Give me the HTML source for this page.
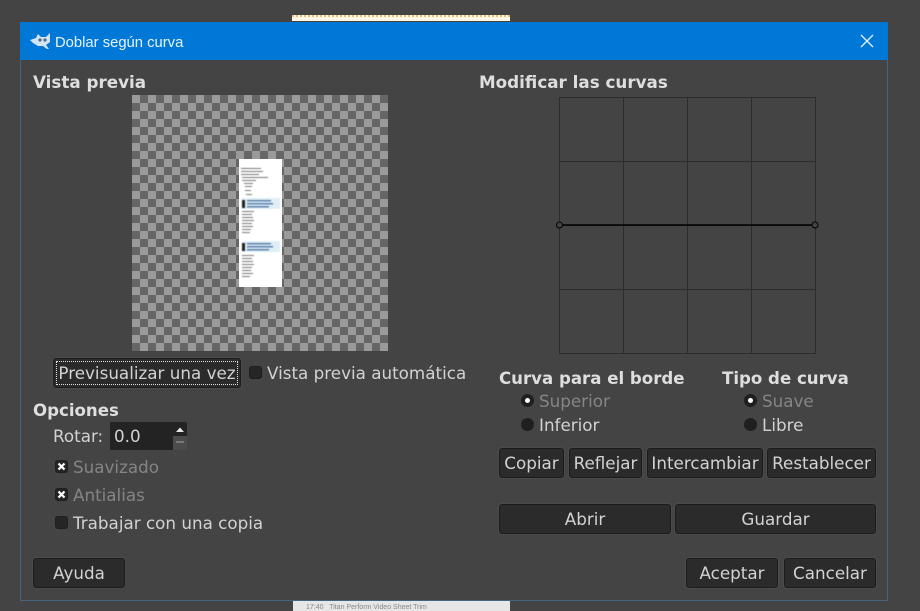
<!DOCTYPE html>
<html><head><meta charset="utf-8">
<style>
html,body{margin:0;padding:0;width:920px;height:611px;overflow:hidden;background:#444444;}
body{position:relative;font-family:"DejaVu Sans",sans-serif;font-size:16.75px;color:#d2d2d2;}
.a{position:absolute;white-space:nowrap;line-height:22px;}
.h{font-weight:bold;color:#dedede;font-size:16.6px;}
.d{color:#858585;}
.btn{position:absolute;box-sizing:border-box;background:#2b2b2b;border:1px solid #1c1c1c;border-radius:3px;box-shadow:0 0 0 1px #4b4b4b;text-align:center;color:#d2d2d2;height:30px;line-height:28px;padding-top:0;white-space:nowrap;}
.cb{position:absolute;width:13px;height:13px;background:#252525;border-radius:3px;box-sizing:border-box;border:1px solid #1e1e1e;}
.rd{position:absolute;width:13px;height:13px;background:#1f1f1f;border-radius:50%;}
.rd i{position:absolute;left:4px;top:4px;width:5px;height:5px;background:#fff;border-radius:50%;}
</style></head><body>
<div class="a" style="left:292px;top:15px;width:218px;height:8px;background:#fff8e8;border-top:2px dotted #e8c070;box-sizing:border-box;"></div>
<div class="a" style="left:293px;top:601px;width:217px;height:10px;background:#e6e6e6;"></div>
<div class="a" style="left:306px;top:604px;font:7px/7px 'Liberation Sans',sans-serif;color:#888;">17:40 &nbsp; Titan Perform Video Sheet Trim</div>
<div class="a" style="left:20px;top:22px;width:868px;height:579px;box-sizing:border-box;border:1px solid #46647e;background:#444444;box-shadow:0 -1px 0 #4a4038;"></div>
<div class="a" style="left:20px;top:22px;width:868px;height:38px;background:#0078d7;"></div>
<svg class="a" style="left:30px;top:32px;" width="21" height="18" viewBox="0 0 21 18"><path d="M0 8 L6 6 L8 2 L11 5 L16 5 L20 1 L20 10 L16 13 L19 17 L17 17 L13 14 L8 14 L3 11 Z" fill="#d4e4f2"/><circle cx="10" cy="8" r="1.6" fill="#4a6a8a"/><circle cx="15" cy="8" r="1.6" fill="#4a6a8a"/></svg>
<div class="a" style="left:55px;top:33px;font:14.8px/20px 'Liberation Sans',sans-serif;color:#e8f4ff;">Doblar según curva</div>
<svg class="a" style="left:860px;top:34px;" width="14" height="14" viewBox="0 0 14 14"><path d="M1 1 L13 13 M13 1 L1 13" stroke="#e6f2ff" stroke-width="1.3" fill="none"/></svg>

<div class="a h" style="left:33px;top:71px;font-size:16.75px;">Vista previa</div>
<div class="a h" style="left:479px;top:71px;font-size:16.75px;">Modificar las curvas</div>

<!-- preview -->
<div class="a" style="left:132px;top:95px;width:256px;height:256px;background-color:#9a9a9a;background-image:linear-gradient(45deg,#666 25%,transparent 25%,transparent 75%,#666 75%),linear-gradient(45deg,#666 25%,transparent 25%,transparent 75%,#666 75%);background-size:16px 16px;background-position:0 0,8px 8px;"></div>
<div class="a" style="left:239px;top:159px;width:43px;height:128px;background:#fff;"></div>
<svg class="a" style="left:239px;top:159px;filter:blur(0.4px);" width="43" height="128" viewBox="0 0 43 128">
<g fill="#777"><rect x="2" y="9" width="20" height="1"/><rect x="2" y="12" width="22" height="1"/><rect x="2" y="15" width="18" height="1"/><rect x="3" y="18" width="26" height="1"/><rect x="3" y="21" width="14" height="1"/><rect x="5" y="24" width="9" height="1"/><rect x="6" y="27" width="7" height="1"/><rect x="6" y="31" width="6" height="1"/><rect x="7" y="35" width="6" height="1"/>
<rect x="3" y="52" width="12" height="1"/><rect x="3" y="55" width="10" height="1"/><rect x="3" y="58" width="11" height="1"/><rect x="3" y="61" width="12" height="1"/><rect x="3" y="64" width="10" height="1"/><rect x="3" y="67" width="11" height="1"/><rect x="3" y="70" width="9" height="1"/><rect x="3" y="73" width="8" height="1"/>
<rect x="3" y="96" width="12" height="1"/><rect x="3" y="99" width="10" height="1"/><rect x="3" y="102" width="11" height="1"/><rect x="3" y="105" width="12" height="1"/><rect x="3" y="108" width="10" height="1"/><rect x="3" y="111" width="9" height="1"/><rect x="3" y="114" width="11" height="1"/><rect x="3" y="117" width="8" height="1"/></g>
<rect x="3" y="39" width="38" height="11" fill="#dfeef6"/><rect x="3" y="82" width="38" height="11" fill="#dfeef6"/>
<g fill="#5a80a8"><rect x="8" y="41" width="24" height="1.5"/><rect x="8" y="44" width="26" height="1.5"/><rect x="8" y="47" width="22" height="1.5"/><rect x="8" y="84" width="24" height="1.5"/><rect x="8" y="87" width="26" height="1.5"/><rect x="8" y="90" width="22" height="1.5"/></g>
<g fill="#222"><rect x="3" y="41" width="3" height="8"/><rect x="3" y="84" width="3" height="8"/></g>
</svg>

<!-- curve grid -->
<svg class="a" style="left:554px;top:96px;" width="266" height="260" viewBox="-4 0 266 260">
<g stroke="#2c2c2c" stroke-width="1" fill="none" shape-rendering="crispEdges"><rect x="1.5" y="1.5" width="256" height="256"/><path d="M65.500 1V257M129.500 1V257M193.500 1V257M1 65.500H257M1 129.500H257M1 193.500H257"/></g>
<path d="M1 129H257" stroke="#000" stroke-width="1.500"/>
<circle cx="1.500" cy="129" r="3" fill="#444" stroke="#000"/><circle cx="257" cy="129" r="3" fill="#444" stroke="#000"/>
</svg>

<!-- preview button -->
<div class="btn" style="left:53px;top:358px;width:188px;height:30px;">Previsualizar una vez</div>
<div class="a" style="left:56px;top:361px;width:182px;height:24px;box-sizing:border-box;border:1px dotted #e0e0e0;"></div>
<div class="cb" style="left:249px;top:366px;"></div>
<div class="a" style="left:267px;top:362px;">Vista previa automática</div>

<!-- options -->
<div class="a h" style="left:33px;top:400px;">Opciones</div>
<div class="a" style="left:53px;top:425px;">Rotar:</div>
<div class="a" style="left:110px;top:422px;width:77px;height:28px;background:#232323;border-radius:2px;box-sizing:border-box;padding:3px 0 0 4px;">0.0</div>
<div class="a" style="left:173px;top:436px;width:14px;height:14px;background:#4c4c4c;"></div>
<svg class="a" style="left:172px;top:422px;" width="15" height="28" viewBox="0 0 15 28"><path d="M4 10L8 5.500L12 10Z" fill="#e6e6e6"/><path d="M4 20H12" stroke="#777" stroke-width="2"/></svg>

<div class="cb" style="left:55px;top:460px;"></div>
<svg class="a" style="left:55px;top:460px;" width="13" height="13"><path d="M3.500 3.500L9.500 9.500M9.500 3.500L3.500 9.500" stroke="#fff" stroke-width="2.200"/></svg>
<div class="a d" style="left:73px;top:456px;">Suavizado</div>
<div class="cb" style="left:55px;top:488px;"></div>
<svg class="a" style="left:55px;top:488px;" width="13" height="13"><path d="M3.500 3.500L9.500 9.500M9.500 3.500L3.500 9.500" stroke="#fff" stroke-width="2.200"/></svg>
<div class="a d" style="left:73px;top:484px;">Antialias</div>
<div class="cb" style="left:55px;top:516px;"></div>
<div class="a" style="left:73px;top:512px;">Trabajar con una copia</div>

<!-- right groups -->
<div class="a h" style="left:499px;top:368px;">Curva para el borde</div>
<div class="a h" style="left:722px;top:368px;">Tipo de curva</div>
<div class="rd" style="left:521px;top:394px;"><i></i></div>
<div class="a d" style="left:539px;top:390px;">Superior</div>
<div class="rd" style="left:521px;top:418px;"></div>
<div class="a" style="left:539px;top:414px;">Inferior</div>
<div class="rd" style="left:744px;top:394px;"><i></i></div>
<div class="a d" style="left:762px;top:390px;">Suave</div>
<div class="rd" style="left:744px;top:418px;"></div>
<div class="a" style="left:762px;top:414px;">Libre</div>

<div class="btn" style="left:499px;top:448px;width:65px;">Copiar</div>
<div class="btn" style="left:569px;top:448px;width:73px;">Reflejar</div>
<div class="btn" style="left:647px;top:448px;width:116px;">Intercambiar</div>
<div class="btn" style="left:767px;top:448px;width:109px;">Restablecer</div>
<div class="btn" style="left:499px;top:504px;width:172px;">Abrir</div>
<div class="btn" style="left:675px;top:504px;width:201px;">Guardar</div>

<div class="btn" style="left:33px;top:558px;width:92px;">Ayuda</div>
<div class="btn" style="left:686px;top:558px;width:92px;">Aceptar</div>
<div class="btn" style="left:784px;top:558px;width:92px;">Cancelar</div>
</body></html>
